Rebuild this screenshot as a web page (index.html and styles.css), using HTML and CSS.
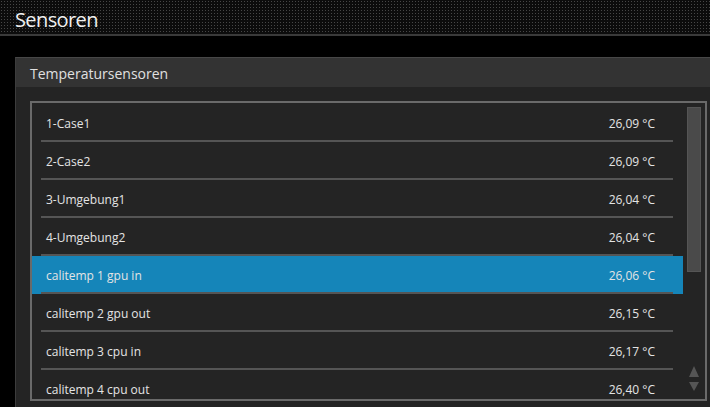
FILE: index.html
```html
<!DOCTYPE html>
<html lang="de">
<head>
<meta charset="utf-8">
<title>Sensoren</title>
<link rel="stylesheet" href="styles.css">
</head>
<body>
<header class="topbar">
  <h1 class="title">Sensoren</h1>
</header>
<section class="panel">
  <div class="panel-head">Temperatursensoren</div>
  <div class="panel-body">
    <div class="list">
      <ul class="items">
        <li class="item"><div class="row"><span>1-Case1</span><span>26,09 °C</span></div></li>
        <li class="item"><div class="row"><span>2-Case2</span><span>26,09 °C</span></div></li>
        <li class="item"><div class="row"><span>3-Umgebung1</span><span>26,04 °C</span></div></li>
        <li class="item"><div class="row"><span>4-Umgebung2</span><span>26,04 °C</span></div></li>
        <li class="item selected"><div class="row"><span>calitemp 1 gpu in</span><span>26,06 °C</span></div></li>
        <li class="item"><div class="row"><span>calitemp 2 gpu out</span><span>26,15 °C</span></div></li>
        <li class="item"><div class="row"><span>calitemp 3 cpu in</span><span>26,17 °C</span></div></li>
        <li class="item"><div class="row"><span>calitemp 4 cpu out</span><span>26,40 °C</span></div></li>
      </ul>
      <div class="scrollbar">
        <div class="thumb"></div>
        <div class="arrows">
          <svg width="10" height="26" viewBox="0 0 10 26"><polygon points="5,0 10,11 0,11" fill="#555"/><polygon points="0,16 10,16 5,25" fill="#555"/></svg>
        </div>
      </div>
    </div>
  </div>
</section>
</body>
</html>
```
FILE: styles.css
```css
html, body {
  margin: 0;
  padding: 0;
  background: #000;
  overflow: hidden;
  width: 710px;
  height: 407px;
}
body {
  font-family: "Open Sans", "Noto Sans", sans-serif;
  color: #e4e4e4;
}
.topbar {
  height: 34px;
  border-bottom: 2px solid #3a3a3a;
  background-color: #0c0c0c;
  background-image: radial-gradient(circle, #474747 0.75px, transparent 1px);
  background-size: 3px 3px;
  box-sizing: content-box;
}
.title {
  margin: 0;
  padding: 7px 0 0 15px;
  font-weight: 400;
  font-size: 20px;
  letter-spacing: -0.6px;
  line-height: 26px;
  color: #f0f0f0;
}
.panel {
  margin: 21px 0 0 15px;
  width: 720px;
  height: 360px;
  border-top: 1px solid #474747;
  border-left: 1px solid #3c3c3c;
  background: #242424;
}
.panel-head {
  height: 29px;
  line-height: 31px;
  padding-left: 14px;
  background: #333;
  font-size: 14px;
  color: #e0e0e0;
}
.panel-body {
  padding: 14px 0 0 14px;
}
.list {
  width: 673px;
  height: 296px;
  border: 2px solid #6a6a6a;
  display: flex;
  overflow: hidden;
}
.items {
  list-style: none;
  margin: 1px 0 0 0;
  padding: 0;
  width: 651px;
}
.item {
  height: 38px;
}
.item.selected {
  background: #1585b9;
}
.row {
  margin: 0 10px 0 9px;
  height: 34px;
  border-bottom: 2px solid #555;
  display: flex;
  align-items: center;
  justify-content: space-between;
  padding: 2px 18px 0 5px;
  font-size: 12px;
}
.scrollbar {
  width: 22px;
  display: flex;
  flex-direction: column;
  align-items: center;
  padding: 4px 0 7px;
  box-sizing: border-box;
}
.thumb {
  width: 12px;
  height: 163px;
  background: #4a4a4a;
  border: 1px solid #555;
}
.arrows {
  margin-top: auto;
  height: 26px;
}
.arrows svg {
  display: block;
}
```
